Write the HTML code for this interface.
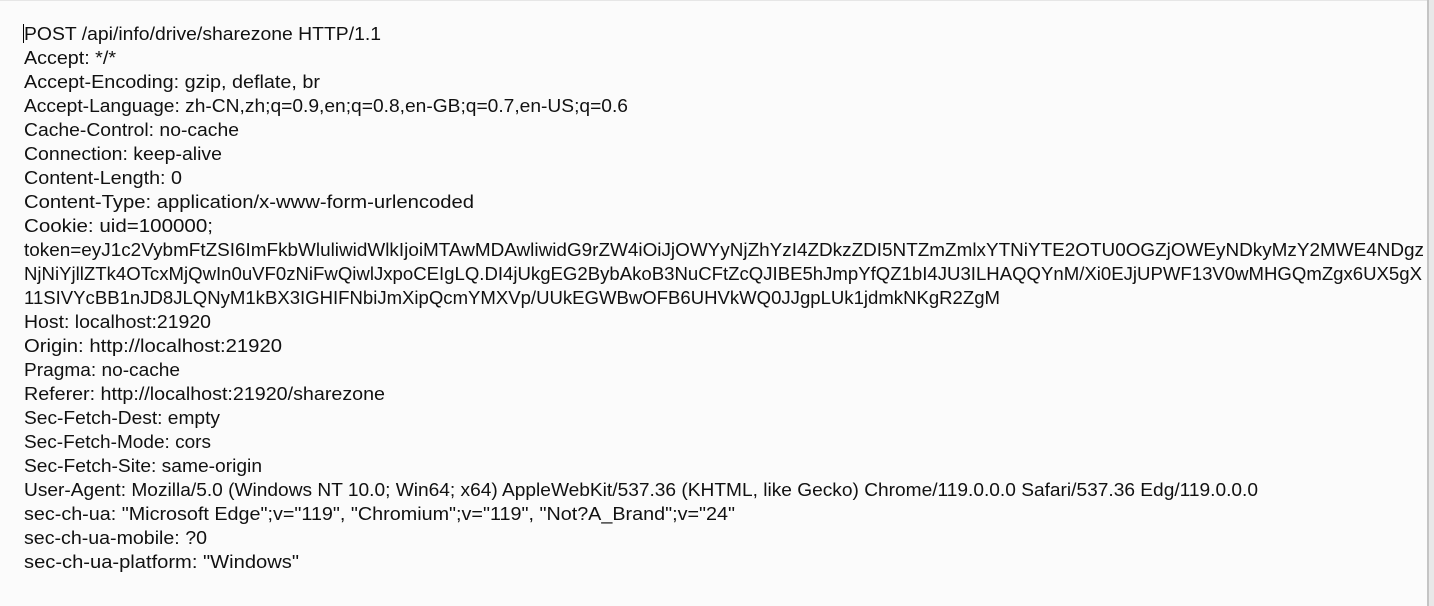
<!DOCTYPE html>
<html><head><meta charset="utf-8"><style>
html,body{margin:0;padding:0;width:1434px;height:606px;overflow:hidden;background:#fbfbfb}
svg{display:block}
text{font-family:"Liberation Sans","Noto Sans CJK SC",sans-serif;font-size:18px;fill:#111}
</style></head><body>
<svg width="1434" height="606" xmlns="http://www.w3.org/2000/svg">
<rect x="0" y="0" width="1434" height="606" fill="#fbfbfb"/>
<rect x="0" y="0" width="1427" height="1" fill="#e6e6e6"/>
<rect x="1427" y="0" width="2" height="606" fill="#c4c4c4"/>
<rect x="1429" y="0" width="5" height="606" fill="#e8e8e8"/>
<rect x="23" y="24" width="1" height="19" fill="#000"/>
<g>
<text x="24" y="40" textLength="357" lengthAdjust="spacingAndGlyphs">POST /api/info/drive/sharezone HTTP/1.1</text>
<text x="24" y="64" textLength="92" lengthAdjust="spacingAndGlyphs">Accept: */*</text>
<text x="24" y="88" textLength="296" lengthAdjust="spacingAndGlyphs">Accept-Encoding: gzip, deflate, br</text>
<text x="24" y="112" textLength="604" lengthAdjust="spacingAndGlyphs">Accept-Language: zh-CN,zh;q=0.9,en;q=0.8,en-GB;q=0.7,en-US;q=0.6</text>
<text x="24" y="136" textLength="215" lengthAdjust="spacingAndGlyphs">Cache-Control: no-cache</text>
<text x="24" y="160" textLength="198" lengthAdjust="spacingAndGlyphs">Connection: keep-alive</text>
<text x="24" y="184" textLength="158" lengthAdjust="spacingAndGlyphs">Content-Length: 0</text>
<text x="24" y="208" textLength="450" lengthAdjust="spacingAndGlyphs">Content-Type: application/x-www-form-urlencoded</text>
<text x="24" y="232" textLength="189" lengthAdjust="spacingAndGlyphs">Cookie: uid=100000;</text>
<text x="24" y="256" textLength="1400" lengthAdjust="spacingAndGlyphs">token=eyJ1c2VybmFtZSI6ImFkbWluliwidWlkIjoiMTAwMDAwliwidG9rZW4iOiJjOWYyNjZhYzI4ZDkzZDI5NTZmZmlxYTNiYTE2OTU0OGZjOWEyNDkyMzY2MWE4NDgz</text>
<text x="24" y="280" textLength="1398" lengthAdjust="spacingAndGlyphs">NjNiYjllZTk4OTcxMjQwIn0uVF0zNiFwQiwlJxpoCEIgLQ.DI4jUkgEG2BybAkoB3NuCFtZcQJIBE5hJmpYfQZ1bI4JU3ILHAQQYnM/Xi0EJjUPWF13V0wMHGQmZgx6UX5gX</text>
<text x="24" y="304" textLength="976" lengthAdjust="spacingAndGlyphs">11SIVYcBB1nJD8JLQNyM1kBX3IGHIFNbiJmXipQcmYMXVp/UUkEGWBwOFB6UHVkWQ0JJgpLUk1jdmkNKgR2ZgM</text>
<text x="24" y="328" textLength="187" lengthAdjust="spacingAndGlyphs">Host: localhost:21920</text>
<text x="24" y="352" textLength="258" lengthAdjust="spacingAndGlyphs">Origin: http://localhost:21920</text>
<text x="24" y="376" textLength="156" lengthAdjust="spacingAndGlyphs">Pragma: no-cache</text>
<text x="24" y="400" textLength="361" lengthAdjust="spacingAndGlyphs">Referer: http://localhost:21920/sharezone</text>
<text x="24" y="424" textLength="196" lengthAdjust="spacingAndGlyphs">Sec-Fetch-Dest: empty</text>
<text x="24" y="448" textLength="187" lengthAdjust="spacingAndGlyphs">Sec-Fetch-Mode: cors</text>
<text x="24" y="472" textLength="238" lengthAdjust="spacingAndGlyphs">Sec-Fetch-Site: same-origin</text>
<text x="24" y="496" textLength="1234" lengthAdjust="spacingAndGlyphs">User-Agent: Mozilla/5.0 (Windows NT 10.0; Win64; x64) AppleWebKit/537.36 (KHTML, like Gecko) Chrome/119.0.0.0 Safari/537.36 Edg/119.0.0.0</text>
<text x="24" y="520" textLength="711" lengthAdjust="spacingAndGlyphs">sec-ch-ua: "Microsoft Edge";v="119", "Chromium";v="119", "Not?A_Brand";v="24"</text>
<text x="24" y="544" textLength="183" lengthAdjust="spacingAndGlyphs">sec-ch-ua-mobile: ?0</text>
<text x="24" y="568" textLength="275" lengthAdjust="spacingAndGlyphs">sec-ch-ua-platform: "Windows"</text>
</g>
</svg>
</body></html>
